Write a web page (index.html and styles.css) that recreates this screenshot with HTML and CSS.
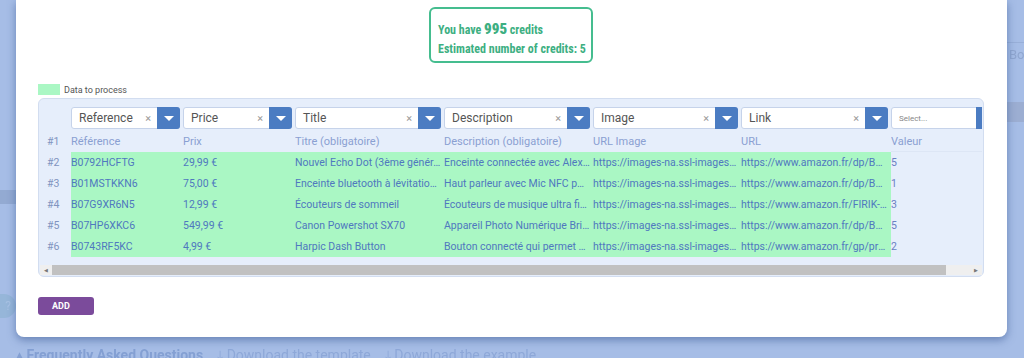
FILE: index.html
```html
<!DOCTYPE html>
<html lang="fr">
<head>
    <meta charset="UTF-8">
    <meta name="viewport" content="width=device-width, initial-scale=1.0">
    <title>Import</title>
    <link rel="stylesheet" href="styles.css">
</head>
<body>
    <div class="page">
        <div class="page-top">
            <aside class="side side-left">
                <span class="side-chip"></span>
                <span class="side-help">?</span>
            </aside>
            <div class="page-main"></div>
            <aside class="side side-right">
                <span class="side-rule"></span>
                <span class="side-text">Bo</span>
                <span class="side-chip"></span>
            </aside>
        </div>
        <nav class="page-links">
            <span class="page-link strong">&#9652; Frequently Asked Questions</span>
            <span class="page-link">&#10515; Download the template</span>
            <span class="page-link">&#10515; Download the example</span>
        </nav>
    </div>

    <div class="modal">
        <div class="credits">
            <p>You have <b>995</b> credits</p>
            <p>Estimated number of credits: 5</p>
        </div>

        <div class="legend"><span class="swatch"></span>Data to process</div>

        <div class="sheet">
            <div class="sheet-scroll">
                <div class="grid">
                    <div class="cell"></div>
                    <div class="pick"><span class="pick-value">Reference</span><span class="pick-clear">&times;</span><span class="pick-btn"></span></div>
                    <div class="pick"><span class="pick-value">Price</span><span class="pick-clear">&times;</span><span class="pick-btn"></span></div>
                    <div class="pick"><span class="pick-value">Title</span><span class="pick-clear">&times;</span><span class="pick-btn"></span></div>
                    <div class="pick"><span class="pick-value">Description</span><span class="pick-clear">&times;</span><span class="pick-btn"></span></div>
                    <div class="pick"><span class="pick-value">Image</span><span class="pick-clear">&times;</span><span class="pick-btn"></span></div>
                    <div class="pick"><span class="pick-value">Link</span><span class="pick-clear">&times;</span><span class="pick-btn"></span></div>
                    <div class="pick empty"><span class="pick-value">Select...</span><span class="pick-btn"></span></div>

                    <div class="cell num">#1</div>
                    <div class="cell head">Référence</div>
                    <div class="cell head">Prix</div>
                    <div class="cell head">Titre (obligatoire)</div>
                    <div class="cell head">Description (obligatoire)</div>
                    <div class="cell head">URL Image</div>
                    <div class="cell head">URL</div>
                    <div class="cell head last">Valeur</div>

                    <div class="cell num">#2</div>
                    <div class="cell data">B0792HCFTG</div>
                    <div class="cell data">29,99 €</div>
                    <div class="cell data">Nouvel Echo Dot (3ème génération), Enceinte connectée</div>
                    <div class="cell data">Enceinte connectée avec Alexa, Tissu anthracite</div>
                    <div class="cell data">https://images-na.ssl-images-amazon.com/images/I/61.jpg</div>
                    <div class="cell data">https://www.amazon.fr/dp/B0792HCFTG</div>
                    <div class="cell val">5</div>

                    <div class="cell num">#3</div>
                    <div class="cell data">B01MSTKKN6</div>
                    <div class="cell data">75,00 €</div>
                    <div class="cell data">Enceinte bluetooth à lévitation magnétique</div>
                    <div class="cell data">Haut parleur avec Mic NFC portable</div>
                    <div class="cell data">https://images-na.ssl-images-amazon.com/images/I/71.jpg</div>
                    <div class="cell data">https://www.amazon.fr/dp/B01MSTKKN6</div>
                    <div class="cell val">1</div>

                    <div class="cell num">#4</div>
                    <div class="cell data">B07G9XR6N5</div>
                    <div class="cell data">12,99 €</div>
                    <div class="cell data">Écouteurs de sommeil</div>
                    <div class="cell data">Écouteurs de musique ultra fins pour dormir</div>
                    <div class="cell data">https://images-na.ssl-images-amazon.com/images/I/51.jpg</div>
                    <div class="cell data">https://www.amazon.fr/FIRIK-Ecouteurs</div>
                    <div class="cell val">3</div>

                    <div class="cell num">#5</div>
                    <div class="cell data">B07HP6XKC6</div>
                    <div class="cell data">549,99 €</div>
                    <div class="cell data">Canon Powershot SX70</div>
                    <div class="cell data">Appareil Photo Numérique Bridge</div>
                    <div class="cell data">https://images-na.ssl-images-amazon.com/images/I/81.jpg</div>
                    <div class="cell data">https://www.amazon.fr/dp/B07HP6XKC6</div>
                    <div class="cell val">5</div>

                    <div class="cell num">#6</div>
                    <div class="cell data">B0743RF5KC</div>
                    <div class="cell data">4,99 €</div>
                    <div class="cell data">Harpic Dash Button</div>
                    <div class="cell data">Bouton connecté qui permet de commander</div>
                    <div class="cell data">https://images-na.ssl-images-amazon.com/images/I/41.jpg</div>
                    <div class="cell data">https://www.amazon.fr/gp/product/B0743RF5KC</div>
                    <div class="cell val">2</div>
                </div>
            </div>
            <div class="hscroll">
                <span class="hscroll-arrow">&#9664;</span>
                <span class="hscroll-track"><span class="hscroll-thumb"></span></span>
                <span class="hscroll-arrow">&#9654;</span>
            </div>
        </div>

        <button class="add-btn">ADD</button>
    </div>
</body>
</html>
```

FILE: styles.css
```css
body {
    margin: 0;
    height: 358px;
    overflow: hidden;
    background-color: #a6bde6;
    font-family: 'Roboto', 'Noto Sans', sans-serif;
}
.page {
    display: flex;
    flex-direction: column;
    height: 358px;
    filter: blur(0.6px);
}
.page-top {
    flex: 1;
    display: flex;
}
.side {
    width: 16px;
    display: flex;
    flex-direction: column;
}
.page-main {
    flex: 1;
}
.side-left .side-chip {
    margin-top: 190px;
    height: 14px;
    background-color: #93aad2;
}
.side-help {
    margin-top: 90px;
    width: 16px;
    height: 24px;
    border-radius: 0 12px 12px 0;
    background-color: #96b6d9;
    color: #a9c2e4;
    font-size: 12px;
    text-align: center;
    line-height: 24px;
}
.side-right {
    width: 17px;
}
.side-rule {
    margin-top: 42px;
    height: 1px;
    background-color: #98afd8;
}
.side-text {
    margin-top: 4px;
    padding-left: 2px;
    font-size: 13px;
    color: #8fa6cf;
}
.side-right .side-chip {
    margin-top: 40px;
    height: 20px;
    background-color: #9caed2;
}
.page-links {
    display: flex;
    gap: 14px;
    height: 14px;
    padding-left: 16px;
    font-size: 14px;
    line-height: 22px;
    color: #8ea8d8;
}
.page-link.strong {
    font-weight: bold;
    color: #84a0d3;
}

.modal {
    position: absolute;
    top: 0;
    left: 16px;
    width: 991px;
    height: 337px;
    box-sizing: border-box;
    padding: 7px 23px 0 22px;
    background-color: #ffffff;
    border-radius: 0 0 8px 8px;
    box-shadow: 0 3px 8px rgba(50, 80, 140, 0.55);
}
.credits {
    width: 164px;
    height: 56px;
    box-sizing: border-box;
    margin: 0 auto;
    padding: 10px 0 0 7px;
    border: 2px solid #45bd8f;
    border-radius: 6px;
    color: #3daf82;
    font-family: 'Roboto Condensed', 'Liberation Sans Narrow', 'Roboto', sans-serif;
    font-weight: bold;
    font-size: 12px;
}
.credits p {
    margin: 0;
    height: 20px;
    line-height: 20px;
}
.credits b {
    font-size: 15px;
}
.legend {
    display: flex;
    align-items: center;
    gap: 4px;
    margin-top: 21px;
    height: 11px;
    font-size: 9px;
    color: #555;
}
.swatch {
    width: 22px;
    height: 11px;
    background-color: #aaf7c4;
}
.sheet {
    margin-top: 3px;
    border: 1px solid #d2ddf0;
    border-radius: 6px;
    background-color: #e6eefb;
    padding: 8px 1px 1px 1px;
}
.sheet-scroll {
    overflow: hidden;
}
.grid {
    display: grid;
    grid-template-columns: 31px 112px 112px 149px 149px 148px 150px 120px;
    width: 871px;
}
.pick {
    display: flex;
    align-items: center;
    height: 22px;
    width: calc(100% - 3px);
    box-sizing: border-box;
    margin-bottom: 2px;
    background-color: #ffffff;
    border: 1px solid #c6d3ea;
    border-radius: 3px;
    font-size: 12px;
    color: #555;
}
.pick-value {
    flex: 1;
    padding-left: 7px;
}
.pick-clear {
    color: #999;
    font-size: 11px;
    margin-right: 6px;
}
.pick-btn {
    position: relative;
    flex: none;
    width: 23px;
    height: 22px;
    margin-right: -1px;
    border-radius: 0 3px 3px 0;
    background-color: #4b7cc2;
}
.pick-btn::after {
    content: '';
    position: absolute;
    left: 7px;
    top: 9px;
    border-left: 5px solid transparent;
    border-right: 5px solid transparent;
    border-top: 5px solid #ffffff;
}
.pick.empty {
    width: 108px;
}
.pick.empty .pick-value {
    font-size: 8px;
    color: #888;
}
.cell {
    height: 21px;
    line-height: 21px;
    font-size: 10.5px;
    white-space: nowrap;
    overflow: hidden;
    text-overflow: ellipsis;
    padding-right: 3px;
}
.cell.num {
    padding-left: 7px;
    color: #8194bf;
}
.cell.head {
    color: #8aa0d2;
    font-size: 11px;
}
.cell.head.last {
    border-bottom: 1px solid #dde6f5;
    height: 20px;
}
.cell.data {
    background-color: #aaf7c4;
    color: #4f78bf;
}
.cell.val {
    color: #6a80c2;
}
.hscroll {
    display: flex;
    align-items: center;
    height: 10px;
    margin-top: 8px;
    background-color: #efefef;
}
.hscroll-arrow {
    width: 12px;
    font-size: 5px;
    color: #777;
    text-align: center;
}
.hscroll-track {
    flex: 1;
    height: 10px;
}
.hscroll-thumb {
    display: block;
    width: 894px;
    height: 10px;
    background-color: #c1c1c1;
}
.add-btn {
    display: block;
    margin-top: 20px;
    width: 56px;
    height: 18px;
    padding: 0 0 0 14px;
    text-align: left;
    border: none;
    border-radius: 3px;
    background-color: #7b4b9b;
    color: #ffffff;
    font-family: 'Roboto', sans-serif;
    font-weight: bold;
    font-size: 9px;
}
```
